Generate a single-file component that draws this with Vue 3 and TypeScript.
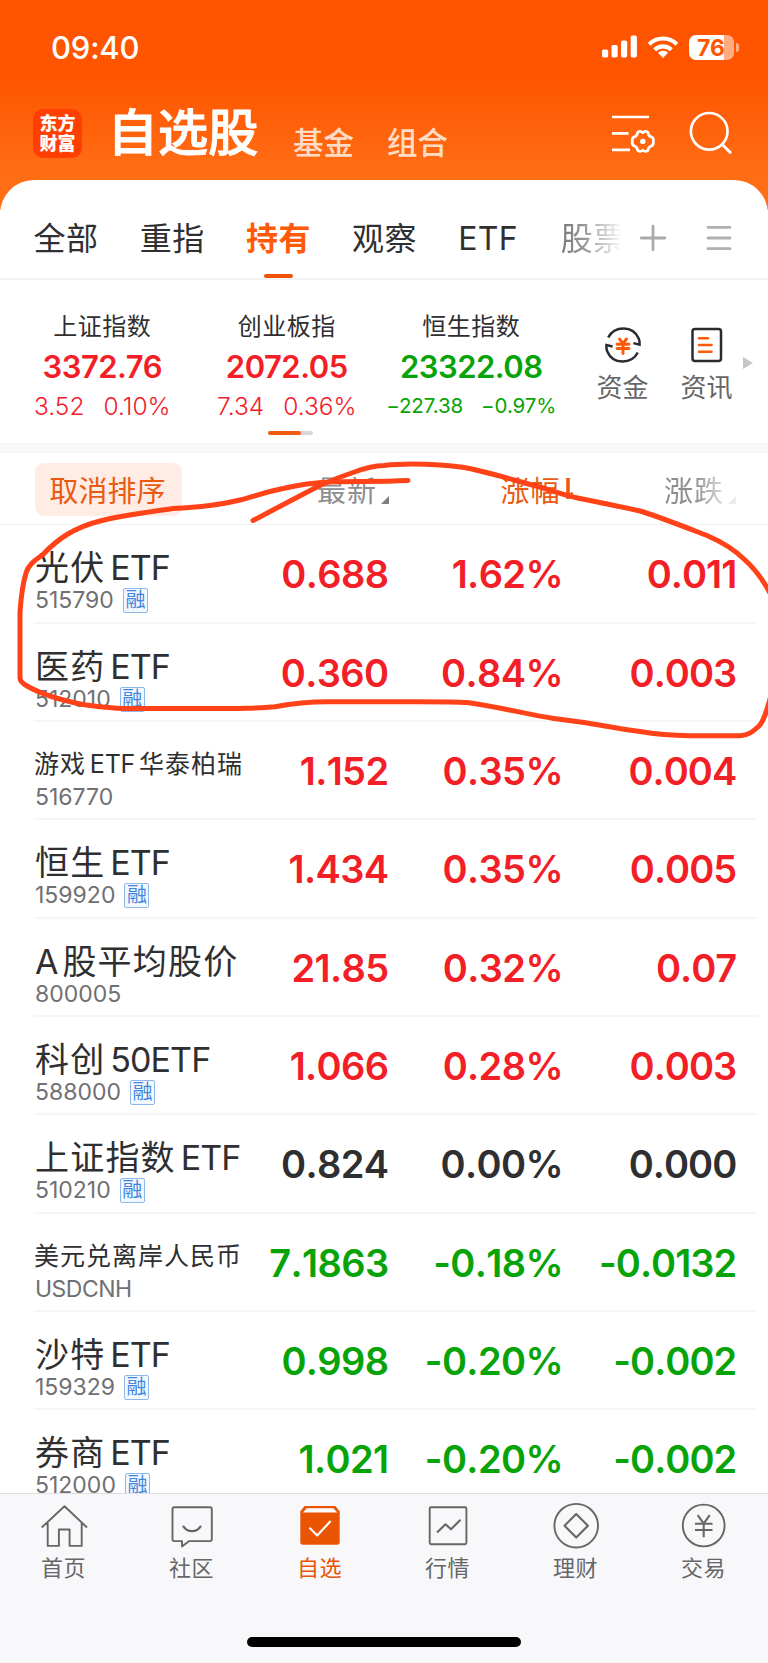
<script setup lang="ts">
type Tone = 'up' | 'down' | 'flat'

interface Quote {
  name: string
  code: string
  margin: boolean
  small?: boolean
  price: string
  pct: string
  change: string
  tone: Tone
}

interface IndexCard {
  name: string
  value: string
  change: string
  pct: string
  tone: Tone
  compact?: boolean
}

const groups: string[] = ['全部', '重指', '持有', '观察', 'ETF', '股票']
const activeGroup = '持有'

const indices: IndexCard[] = [
  { name: '上证指数', value: '3372.76', change: '3.52', pct: '0.10%', tone: 'up' },
  { name: '创业板指', value: '2072.05', change: '7.34', pct: '0.36%', tone: 'up' },
  { name: '恒生指数', value: '23322.08', change: '−227.38', pct: '−0.97%', tone: 'down', compact: true },
]

const quotes: Quote[] = [
  { name: '光伏 ETF', code: '515790', margin: true, price: '0.688', pct: '1.62%', change: '0.011', tone: 'up' },
  { name: '医药 ETF', code: '512010', margin: true, price: '0.360', pct: '0.84%', change: '0.003', tone: 'up' },
  { name: '游戏 ETF 华泰柏瑞', code: '516770', margin: false, small: true, price: '1.152', pct: '0.35%', change: '0.004', tone: 'up' },
  { name: '恒生 ETF', code: '159920', margin: true, price: '1.434', pct: '0.35%', change: '0.005', tone: 'up' },
  { name: 'A 股平均股价', code: '800005', margin: false, price: '21.85', pct: '0.32%', change: '0.07', tone: 'up' },
  { name: '科创 50ETF', code: '588000', margin: true, price: '1.066', pct: '0.28%', change: '0.003', tone: 'up' },
  { name: '上证指数 ETF', code: '510210', margin: true, price: '0.824', pct: '0.00%', change: '0.000', tone: 'flat' },
  { name: '美元兑离岸人民币', code: 'USDCNH', margin: false, small: true, price: '7.1863', pct: '-0.18%', change: '-0.0132', tone: 'down' },
  { name: '沙特 ETF', code: '159329', margin: true, price: '0.998', pct: '-0.20%', change: '-0.002', tone: 'down' },
  { name: '券商 ETF', code: '512000', margin: true, price: '1.021', pct: '-0.20%', change: '-0.002', tone: 'down' },
]

const navItems: string[] = ['首页', '社区', '自选', '行情', '理财', '交易']

// Latin runs are tracked tighter than the Chinese text around them.
const isLatin = (part: string): boolean => /^[A-Z0-9 ]+$/.test(part)
const nameParts = (name: string): string[] => name.split(/([A-Z0-9 ]+)/).filter(Boolean)
</script>

<template>
  <div class="screen">
    <header class="top">
      <div class="status">
        <span class="time">09:40</span>
        <svg class="signal" width="36" height="24" viewBox="0 0 36 24" fill="#fff">
          <rect x="0" y="14.5" width="6.2" height="8" rx="1.8" />
          <rect x="9.5" y="10" width="6.2" height="12.5" rx="1.8" />
          <rect x="19" y="5.5" width="6.2" height="17" rx="1.8" />
          <rect x="28.7" y="0.5" width="6.2" height="22" rx="1.8" />
        </svg>
        <svg class="wifi" width="32" height="24" viewBox="0 0 32 24" fill="none" stroke="#fff" stroke-width="4.2">
          <path d="M2.2 9.2C10 1.6 22 1.6 29.8 9.2" />
          <path d="M7.6 14.8c5-4.6 11.8-4.6 16.8 0" />
          <path d="M16 23l-5-5.2c3-2.6 7-2.6 10 0z" fill="#fff" stroke="none" />
        </svg>
        <div class="battery"><span>76</span></div>
        <i class="battery-cap"></i>
      </div>
      <div class="titlebar">
        <div class="logo"><span>东方</span><span>财富</span></div>
        <h1>自选股</h1>
        <span class="sub">基金</span>
        <span class="sub">组合</span>
        <svg class="manage" width="46" height="40" viewBox="0 0 46 40" fill="none" stroke="#fff" stroke-width="2.7">
          <path d="M1 3h37M1 19.4h16.5M1 35.8h18" />
          <path
            stroke-width="2.7"
            stroke-linejoin="round"
            d="M31.800 18.700Q34.200 16.200 37 18.400Q37.200 21.800 39.700 22.600Q42.900 23.500 42.300 27.400Q42.900 31.300 39.700 32.200Q37.200 33 37 36.400Q34.200 38.600 31.800 36.100Q29.400 38.600 26.600 36.400Q26.400 33 23.900 32.200Q20.700 31.300 21.300 27.400Q20.700 23.500 23.900 22.600Q26.400 21.800 26.600 18.400Q29.400 16.200 31.800 18.700z"
          />
          <circle cx="31.800" cy="27.400" r="2.700" fill="#fff" stroke="none" />
        </svg>
        <svg class="search" width="44" height="44" viewBox="0 0 44 44" fill="none" stroke="#fff" stroke-width="2.700">
          <circle cx="20.200" cy="20.300" r="18.300" />
          <path d="M33 33.200l9 9" stroke-width="3" />
        </svg>
      </div>
    </header>

    <main class="sheet">
      <nav class="groups">
        <span
          v-for="g in groups"
          :key="g"
          class="group"
          :class="{ active: g === activeGroup, latin: g === 'ETF', faded: g === '股票' }"
        >{{ g }}</span>
        <svg class="plus" width="28" height="28" viewBox="0 0 28 28" stroke="#aaa" stroke-width="2.800" stroke-linecap="round">
          <path d="M2.200 14h23.600M14 2.200v23.600" />
        </svg>
        <svg class="burger" width="26" height="26" viewBox="0 0 26 26" stroke="#b0b0b0" stroke-width="2.800" stroke-linecap="round">
          <path d="M2 2.300h22M2 13h22M2 23.700h22" />
        </svg>
      </nav>

      <section class="indices">
        <div v-for="i in indices" :key="i.name" class="index" :class="i.tone">
          <span class="index-name">{{ i.name }}</span>
          <span class="index-value">{{ i.value }}</span>
          <span class="index-change" :class="{ compact: i.compact }"><b>{{ i.change }}</b><b>{{ i.pct }}</b></span>
        </div>
        <div class="tool">
          <svg width="38" height="38" viewBox="0 0 38 38" fill="none">
            <g stroke="#2b2b2f" stroke-width="2.500">
              <path d="M4.200 11.500C10.500-.5 29-.9 34.700 12.500c.8 2 1.100 4 .9 6.100l-6.200-1.500" />
              <path d="M33.800 26.500C27.500 38.500 9 38.900 3.300 25.500c-.8-2-1.100-4-.9-6.500l6.200 1.500" />
            </g>
            <path d="M15.500 13l3.500 4.500 3.500-4.500M13 18.200h12M13 22.500h12M19 17.500v10" stroke="#ff5a0a" stroke-width="2.900" stroke-linecap="round" />
          </svg>
          <span>资金</span>
        </div>
        <div class="tool">
          <svg width="38" height="38" viewBox="0 0 38 38" fill="none">
            <rect x="4.500" y="3" width="28.500" height="32" rx="2.500" stroke="#2b2b2f" stroke-width="2.500" />
            <path d="M11 12.300h9M11 19h12.500M11 25.700h12.500" stroke="#ff5a0a" stroke-width="2.600" stroke-linecap="round" />
          </svg>
          <span>资讯</span>
        </div>
        <i class="more"></i>
        <div class="pager"><i></i></div>
      </section>

      <section class="list">
        <div class="list-head">
          <button class="reset">取消排序</button>
          <span class="col c1">最新<i class="corner"></i></span>
          <span class="col c2">涨幅<svg width="10" height="24" viewBox="0 0 10 24" fill="none" stroke="#ef5a0a" stroke-width="3.600"><path d="M3 1v21" /><path d="M3.500 19.500l4-4" stroke-width="2.400" /></svg></span>
          <span class="col c3">涨跌<i class="corner"></i></span>
        </div>
        <div v-for="q in quotes" :key="q.code" class="row" :class="q.tone">
          <div class="id">
            <div class="name" :class="{ small: q.small }"><span v-for="(p, k) in nameParts(q.name)" :key="k" :class="{ latin: isLatin(p) }">{{ p }}</span></div>
            <div class="code" :class="{ alpha: q.code === 'USDCNH' }">{{ q.code }}<span v-if="q.margin" class="tag">融</span></div>
          </div>
          <span class="num">{{ q.price }}</span>
          <span class="num">{{ q.pct }}</span>
          <span class="num change">{{ q.change }}</span>
        </div>
      </section>
    </main>

    <footer class="nav">
      <div class="nav-items">
        <div v-for="(n, k) in navItems" :key="n" class="nav-item" :class="{ on: k === 2 }">
          <svg width="48" height="48" viewBox="0 0 48 48" fill="none" stroke="#666" stroke-width="1.900" stroke-linejoin="round">
            <path v-if="k === 0" d="M1.700 25.500L24.500 4.200l22.500 21.300M7.700 21v22.900h11.200V27.500h10.700v16.400h12.100V21" />
            <template v-else-if="k === 1">
              <path d="M6.300 5.200h35.700q1.800 0 1.800 1.800v30.300q0 1.800-1.800 1.800H21.200l-7.200 5.300v-5.300H6.300q-1.800 0-1.800-1.800V7q0-1.800 1.800-1.800z" />
              <path d="M15 23.800c4.500 7.200 13.500 7.200 18 0" stroke-width="2.200" />
            </template>
            <template v-else-if="k === 2">
              <path d="M8.500 4h31l4.200 5.500V40q0 2.700-2.700 2.700H7Q4.300 42.700 4.300 40V9.500z" fill="#ea5504" stroke="none" />
              <path d="M10.700 6.300h26.600l4 4.200H7z" fill="#fff" stroke="none" />
              <path d="M13.500 25.800l7.700 7.700 13.500-14.500" stroke="#fff" stroke-width="2.100" />
            </template>
            <template v-else-if="k === 3">
              <rect x="5.700" y="5.200" width="36.700" height="37" rx="1.500" />
              <path d="M13 30.500l8.500-8.200 5.500 5 9.500-9.600" stroke-width="2.100" />
            </template>
            <template v-else-if="k === 4">
              <circle cx="24.200" cy="23.700" r="21.800" />
              <path d="M24.200 12l11.700 11.700-11.700 11.700-11.700-11.700z" stroke-width="2.100" />
            </template>
            <template v-else>
              <circle cx="23.700" cy="23.500" r="20.900" />
              <path d="M17.700 13.200l6 8.500 6-8.500M15 21.700h17.500M15 28h17.500M23.700 21.700v13.500" stroke-width="2.100" />
            </template>
          </svg>
          <span>{{ n }}</span>
        </div>
      </div>
      <i class="home-bar"></i>
    </footer>

    <svg class="scribble" width="768" height="1663" viewBox="0 0 768 1663" fill="none" stroke="#ff4218" stroke-width="5" stroke-linecap="round" stroke-linejoin="round">
      <path
        d="M253 520.500C273 510 295 498.500 313 489C326 482 340 477 353 472.500C365 468 374 465.500 384 465.500C400 463.500 425 464 440 465C456 466 470 468 480 471C500 475.500 520 482 540 487C555 491.500 563 495 580 498.500C600 502.500 622 507 642 511.500C665 519 690 529 707 535.500C722 542 735 550 745 560C755 569 763 580 770 593"
      />
      <path
        d="M770 699C767 710 764 721 759 726C753 731.500 748 735.500 740 735.800H690C675 735.500 655 734 640 731.500C620 729 600 725 584 722.500L554 718.500C530 715 500 707 467 702.500C455 701.500 430 701.500 384 701.800H327C305 701.800 290 704 275 706.800C262 708 250 708 235 708.500H125C105 708 95 706 83 704.500C60 700 40 693.500 27 686Q20 682 20 678V612C21 597 24 580 26 573C29 563 37 559 43 554.500C50 547 58 540 67 534.500C77 528.500 88 524 100 521C124 515 150 512 173 508.500C195 507.500 220 505 240 500C255 496 268 491.500 283 488.500C300 484.500 315 482.500 330 482C350 481 378 482 408 480.500"
      />
    </svg>
  </div>
</template>

<style>
body {
  margin: 0;
}
</style>

<style scoped>
.screen {
  position: relative;
  width: 768px;
  height: 1663px;
  overflow: hidden;
  display: flex;
  flex-direction: column;
  background: #fff;
  color: #2f2f31;
  font-family: Inter, "Noto Sans CJK SC", sans-serif;
  font-weight: 400;
  white-space: nowrap;
}
.screen svg {
  flex: none;
  display: block;
}
.screen i {
  display: block;
  flex: none;
}

.top {
  flex: none;
  height: 210px;
  background: linear-gradient(#ff5500 0, #ff5500 78px, #ff6d15 172px);
}
.status {
  display: flex;
  align-items: center;
  height: 94px;
  color: #fff;
}
.time {
  margin-left: 51px;
  width: 551px;
  font-size: 31px;
  font-weight: 500;
  letter-spacing: -0.200px;
}
.wifi {
  margin-left: 9px;
}
.battery {
  margin-left: 10px;
  width: 45px;
  height: 25px;
  border-radius: 7px;
  background: linear-gradient(90deg, #fff 35px, #ffac83 35px);
  color: #ff5500;
  font-size: 23px;
  font-weight: 700;
  line-height: 26px;
  text-align: center;
}
.battery span {
  margin-left: -1px;
}
.battery-cap {
  margin-left: 2px;
  width: 3px;
  height: 9px;
  border-radius: 0 4px 4px 0;
  background: #ffac83;
}
.titlebar {
  display: flex;
  height: 86px;
  color: #fff;
}
.logo {
  flex: none;
  display: flex;
  flex-direction: column;
  justify-content: center;
  margin: 15px 0 0 33px;
  width: 49px;
  height: 49px;
  border-radius: 10px;
  background: #ff3f02;
  font-size: 18px;
  font-weight: 900;
  line-height: 20px;
  text-align: center;
}
h1 {
  flex: none;
  margin: 3px 0 0 25.500px;
  width: 185.500px;
  font-size: 50.500px;
  font-weight: 500;
  line-height: 72px;
  letter-spacing: -0.300px;
  -webkit-text-stroke: 0.800px #fff;
}
.sub {
  flex: none;
  margin-top: 18.500px;
  width: 94px;
  font-size: 30.500px;
  font-weight: 500;
  line-height: 60px;
  color: #ffdcc6;
}
.manage {
  margin: 20px 0 0 130px;
}
.search {
  margin: 17px 0 0 32px;
}

.sheet {
  flex: none;
  height: 1313px;
  margin-top: -30px;
  overflow: hidden;
  border-radius: 34px 34px 0 0;
  background: #fff;
}
.groups {
  display: flex;
  align-items: center;
  box-sizing: border-box;
  height: 99.500px;
  padding: 0 0 0 33.500px;
  border-bottom: 2px solid #f4f4f6;
}
.group {
  position: relative;
  flex: none;
  width: 106.200px;
  font-size: 32px;
  letter-spacing: 0.500px;
  line-height: 60px;
  padding-bottom: 1px;
  margin-top: 21px;
}
.group.latin {
  width: 102.500px;
  letter-spacing: 0.300px;
}
.group.active {
  color: #ff5a0a;
  font-weight: 700;
}
.group.active::after {
  content: "";
  position: absolute;
  left: 18px;
  bottom: -8.500px;
  width: 29px;
  height: 4px;
  border-radius: 2px;
  background: #f25208;
}
.group.faded {
  width: 59px;
  overflow: hidden;
  color: transparent;
  background: linear-gradient(90deg, #777 0, #999 24px, #f4f4f4 58px);
  background-clip: text;
}
.plus {
  margin: 19px 0 0 19px;
}
.burger {
  margin: 19px 0 0 39px;
}

.indices {
  position: relative;
  display: flex;
  box-sizing: border-box;
  height: 163px;
  padding: 31px 0 0 10px;
}
.index {
  flex: none;
  display: flex;
  flex-direction: column;
  align-items: center;
  width: 184.500px;
}
.index-name {
  font-size: 24px;
  line-height: 32px;
  letter-spacing: 0.500px;
  color: #2f2f31;
}
.index-value {
  font-size: 31px;
  font-weight: 600;
  line-height: 47px;
  letter-spacing: -0.500px;
}
.index-change {
  display: flex;
  gap: 19px;
  font-size: 24.500px;
  line-height: 32px;
}
.index-change b {
  font-weight: 350;
}
.index-change.compact {
  gap: 18px;
  font-size: 20.500px;
  letter-spacing: -0.100px;
}
.index-change.compact b {
  font-weight: 400;
}
.up {
  color: #f22026;
}
.down {
  color: #08a308;
}
.tool {
  flex: none;
  display: flex;
  flex-direction: column;
  align-items: center;
  width: 84px;
  margin-top: 15px;
  font-size: 26px;
  line-height: 47px;
  color: #666;
}
.index + .tool {
  margin-left: 17px;
}
.more {
  width: 0;
  height: 0;
  margin: 46.500px 0 0 -6px;
  border: 6.500px solid transparent;
  border-left: 10px solid #c6c6c8;
  border-right: 0;
}
.pager {
  position: absolute;
  left: 268px;
  top: 151px;
  width: 45px;
  height: 4px;
  border-radius: 2px;
  background: #d6d6de;
}
.pager i {
  width: 33px;
  height: 4px;
  border-radius: 2px;
  background: #f25a10;
}

.list {
  border-top: 10px solid #f7f7fa;
}
.list-head {
  display: flex;
  align-items: center;
  box-sizing: border-box;
  height: 72px;
  padding: 2px 0 0 35px;
  border-bottom: 1px solid #f0f0f2;
  font-size: 29px;
  color: #8e8e90;
}
.reset {
  width: 147px;
  height: 53px;
  padding: 0 2px 0 0;
  border: 0;
  border-radius: 9px;
  background: #ffece4;
  color: #ea5a10;
  font: inherit;
  text-align: center;
}
.col {
  display: flex;
  align-items: center;
  letter-spacing: 1px;
}
.c1 {
  margin-left: 135px;
  width: 183.500px;
}
.c2 {
  width: 163.500px;
  color: #ea5a10;
}
.c2 svg {
  margin-left: 4px;
}
.c3 {
  -webkit-mask-image: linear-gradient(90deg, #000 30px, rgba(0, 0, 0, 0.150) 66px);
  mask-image: linear-gradient(90deg, #000 30px, rgba(0, 0, 0, 0.150) 66px);
}
.corner {
  width: 0;
  height: 0;
  margin: 22px 0 0 4px;
  border-left: 8px solid transparent;
  border-bottom: 8px solid #808084;
}
.row {
  display: grid;
  grid-template-columns: 194px 159.500px 174.500px 173.300px;
  box-sizing: border-box;
  height: 98.330px;
  margin: 0 11px 0 34px;
  padding-left: 1px;
  border-bottom: 2px solid #f6f6f8;
}
.list-head + .row {
  height: 99.300px;
}
.list-head + .row .id {
  padding-top: 19.500px;
}
.list-head + .row .num {
  line-height: 99.500px;
}
.id {
  padding-top: 19px;
  color: #2f2f31;
}
.name {
  display: flex;
  height: 42px;
  font-size: 34px;
  line-height: 48px;
  letter-spacing: 1.200px;
  white-space: pre;
}
.name .latin {
  letter-spacing: -0.900px;
  word-spacing: -3.800px;
}
.name.small {
  font-size: 25px;
  line-height: 47px;
  letter-spacing: 1px;
  margin-left: -1px;
}
.name.small .latin {
  letter-spacing: -0.200px;
  word-spacing: -3px;
}
.code {
  display: flex;
  align-items: center;
  height: 29px;
  font-size: 23px;
  line-height: 29px;
  color: #707072;
}
.code.alpha {
  letter-spacing: -0.500px;
}
.tag {
  box-sizing: border-box;
  width: 25px;
  height: 25px;
  margin-left: 9px;
  border: 1.500px solid #8fb8ea;
  border-radius: 2px;
  background: #f3f8ff;
  color: #3f86dc;
  font-size: 20px;
  line-height: 22px;
  text-align: center;
}
.num {
  text-align: right;
  font-size: 38px;
  font-weight: 600;
  line-height: 98.500px;
  letter-spacing: -0.600px;
  font-kerning: none;
}
.num.change {
  letter-spacing: -0.950px;
}

.nav {
  position: relative;
  flex: none;
  height: 170px;
  border-top: 1px solid #e0e0e4;
  background: #f8f8fb;
}
.nav-items {
  display: flex;
}
.nav-item {
  display: flex;
  flex-direction: column;
  align-items: center;
  width: 128px;
  padding-top: 8px;
  font-size: 22px;
  line-height: 36px;
  letter-spacing: 0.500px;
  color: #666;
}
.nav-item span {
  margin-left: -1px;
}
.nav-item.on {
  color: #ea5504;
}
.home-bar {
  position: absolute;
  left: 247px;
  bottom: 17.500px;
  width: 274px;
  height: 10px;
  border-radius: 5px;
  background: #000;
}

.scribble {
  position: absolute;
  left: 0;
  top: 0;
}
</style>
